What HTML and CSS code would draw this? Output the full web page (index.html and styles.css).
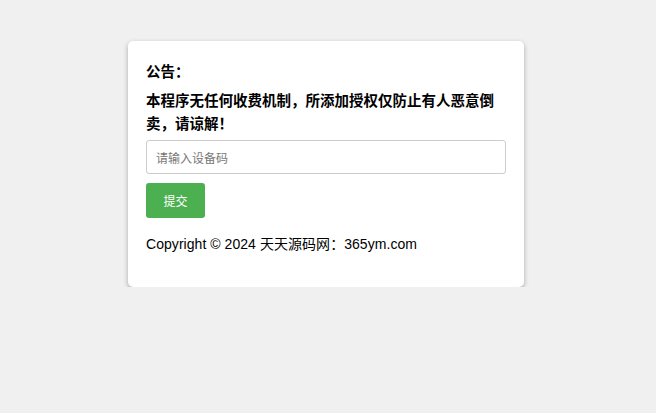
FILE: index.html
```html
<!DOCTYPE html>
<html lang="zh-CN">
<head>
<meta charset="utf-8">
<title>公告</title>
<link rel="stylesheet" href="styles.css">
</head>
<body>
<div class="card">
  <div class="notice-title">公告：</div>
  <div class="notice-text">本程序无任何收费机制，所添加授权仅防止有人恶意倒卖，请谅解！</div>
  <form class="form" onsubmit="return false;">
    <input class="code-input" type="text" placeholder="请输入设备码">
    <button class="submit-btn" type="submit">提交</button>
  </form>
  <p class="copyright">Copyright © 2024 天天源码网：365ym.com</p>
</div>
</body>
</html>
```

FILE: styles.css
```css
html, body {
  margin: 0;
  padding: 0;
}
body {
  background: #f0f0f0;
  font-family: "Liberation Sans", Arial, "Noto Sans CJK SC", sans-serif;
  color: #000;
  padding-top: 41px;
}
.card {
  width: 396px;
  box-sizing: border-box;
  margin: 0 0 0 128px;
  background: #fff;
  border-radius: 5px;
  box-shadow: 0 2px 5px rgba(0, 0, 0, 0.3);
  padding: 18px 18px 18px 18px;
}
.notice-title,
.notice-text {
  font-family: "Noto Sans CJK SC", "Liberation Sans", sans-serif;
  font-weight: bold;
  font-size: 14.5px;
  line-height: 23px;
}
.notice-text {
  margin-top: 6px;
}
.form {
  display: flex;
  flex-direction: column;
  align-items: flex-start;
  margin-top: 6px;
}
.code-input {
  width: 100%;
  height: 34px;
  box-sizing: border-box;
  border: 1px solid #ccc;
  border-radius: 3px;
  padding: 0 9px;
  font-family: "Noto Sans CJK SC", sans-serif;
  font-size: 12px;
  color: #333;
  outline: none;
  margin: 0;
}
.code-input::placeholder {
  color: #777;
}
.submit-btn {
  margin-top: 9px;
  width: 59px;
  height: 35px;
  border: none;
  border-radius: 3px;
  background: #4caf50;
  color: #fff;
  font-family: "Noto Sans CJK SC", sans-serif;
  font-size: 12px;
  padding: 0;
  cursor: pointer;
}
.copyright {
  margin: 16px 0 15px;
  font-size: 14px;
  line-height: 20px;
  letter-spacing: 0.05px;
}
```
